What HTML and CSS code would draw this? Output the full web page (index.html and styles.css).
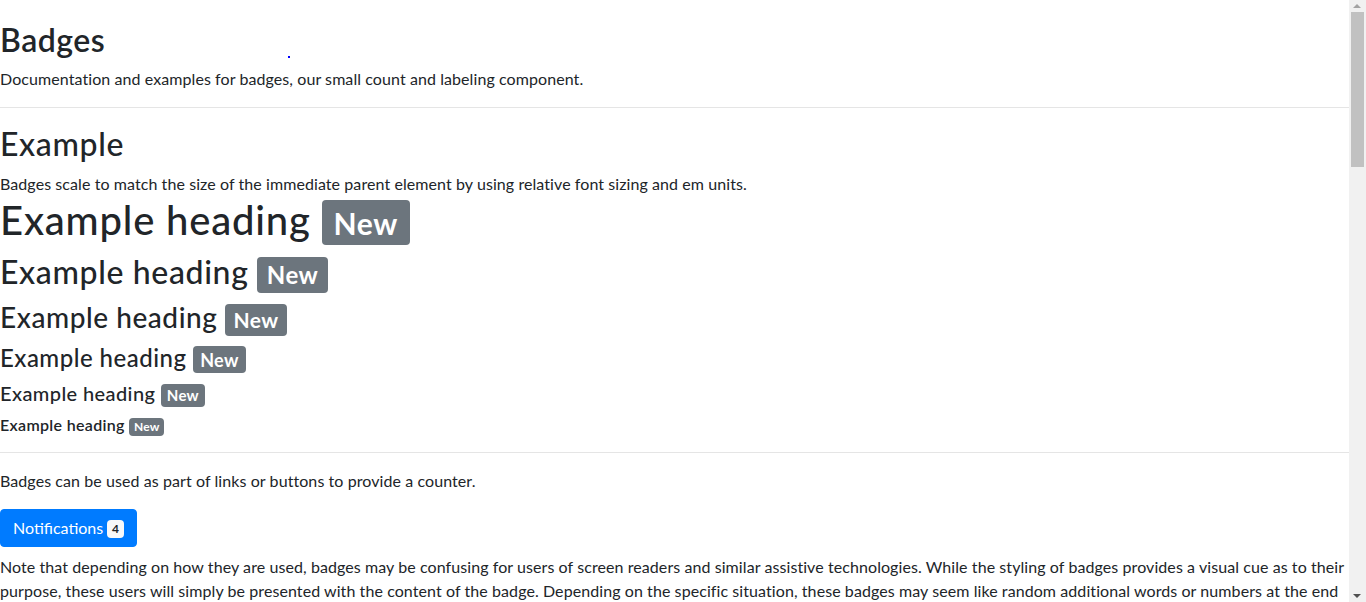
FILE: index.html
```html
<!DOCTYPE html>
<html lang="en">
<head>
<meta charset="utf-8">
<title>Badges</title>
<link rel="stylesheet" href="styles.css">
</head>
<body>
<main class="doc">
  <header class="doc-head">
    <h1 class="title">Badges</h1>
    <span class="dot"></span>
    <p class="lead-text">Documentation and examples for badges, our small count and labeling component.</p>
  </header>
  <hr class="rule rule-top">
  <section>
    <h2 class="h2">Example</h2>
    <p class="intro">Badges scale to match the size of the immediate parent element by using relative font sizing and em units.</p>
    <div class="examples">
      <h1 class="h1">Example heading <span class="badge">New</span></h1>
      <h2 class="h2">Example heading <span class="badge">New</span></h2>
      <h3 class="h3">Example heading <span class="badge">New</span></h3>
      <h4 class="h4">Example heading <span class="badge">New</span></h4>
      <h5 class="h5">Example heading <span class="badge">New</span></h5>
      <h6 class="h6">Example heading <span class="badge">New</span></h6>
    </div>
  </section>
  <hr class="rule">
  <section>
    <p class="para">Badges can be used as part of links or buttons to provide a counter.</p>
    <button class="btn" type="button">Notifications <span class="badge badge-light">4</span></button>
    <p class="para note">Note that depending on how they are used, badges may be confusing for users of screen readers and similar assistive technologies. While the styling of badges provides a visual cue as to their purpose, these users will simply be presented with the content of the badge. Depending on the specific situation, these badges may seem like random additional words or numbers at the end of a sentence, link, or button.</p>
    <p class="para">Unless the context is clear (as with the “Notifications” example, where it is understood that the “4” is the number of notifications), consider including additional context with a visually hidden piece of additional text.</p>
  </section>
</main>
<div class="scrollbar" aria-hidden="true">
  <span class="sb-arrow sb-up"></span>
  <span class="sb-thumb"></span>
  <span class="sb-arrow sb-down"></span>
</div>
</body>
</html>
```
FILE: styles.css
```css
html, body {
  margin: 0;
  padding: 0;
}
body {
  font-family: "Lato", "Liberation Sans", sans-serif;
  font-size: 16px;
  line-height: 1.5;
  letter-spacing: 0.08px;
  color: #212529;
  background: #fff;
}
.doc {
  width: 1349px;
  padding-top: 21px;
}
.doc-head {
  position: relative;
}
.dot {
  position: absolute;
  left: 288px;
  top: 35px;
  width: 2px;
  height: 2px;
  background: #0000ff;
}
.title {
  margin: 0 0 8px;
  font-size: 32px;
  font-weight: 600;
  line-height: 1.2;
  letter-spacing: 0.5px;
}
.h1, .h2, .h3, .h4, .h5, .h6 {
  margin: 0 0 8px;
  font-weight: 500;
  line-height: 1.2;
  letter-spacing: 0.02em;
}
.h1 { font-size: 40px; }
.h2 { font-size: 32px; }
.h3 { font-size: 28px; }
.h4 { font-size: 24px; }
.h5 { font-size: 20px; }
.h6 { font-size: 16px; font-weight: 600; }
.lead-text, .para {
  margin: 0 0 16px;
}
.intro {
  margin: 0;
}
.rule {
  margin: 16px 0;
  border: 0;
  border-top: 1px solid rgba(0, 0, 0, 0.1);
}
.rule-top {
  margin-bottom: 17px;
}
.badge {
  display: inline-block;
  padding: 0.25em 0.4em;
  font-size: 75%;
  font-weight: 700;
  line-height: 1;
  letter-spacing: 0.02em;
  text-align: center;
  white-space: nowrap;
  vertical-align: baseline;
  border-radius: 4px;
  color: #fff;
  background-color: #6c757d;
}
.btn {
  display: inline-block;
  font-family: inherit;
  font-size: 16px;
  line-height: 1.5;
  letter-spacing: 0;
  font-weight: 400;
  color: #fff;
  background-color: #007bff;
  border: 1px solid #007bff;
  border-radius: 4px;
  padding: 6px 12px;
  margin: 0 0 8px;
  cursor: pointer;
}
.badge-light {
  color: #212529;
  background-color: #f8f9fa;
  position: relative;
  top: -1px;
}
.scrollbar {
  position: fixed;
  top: 0;
  right: 0;
  width: 17px;
  height: 100vh;
  background: #f1f1f1;
}
.sb-thumb {
  position: absolute;
  left: 2px;
  top: 12px;
  width: 13px;
  height: 155px;
  background: #c1c1c1;
}
.sb-arrow {
  position: absolute;
  left: 4px;
  width: 0;
  height: 0;
  border-left: 4px solid transparent;
  border-right: 4px solid transparent;
}
.sb-up {
  top: 4px;
  border-bottom: 4px solid #a3a3a3;
}
.sb-down {
  bottom: 4px;
  border-top: 4px solid #505050;
}
```
